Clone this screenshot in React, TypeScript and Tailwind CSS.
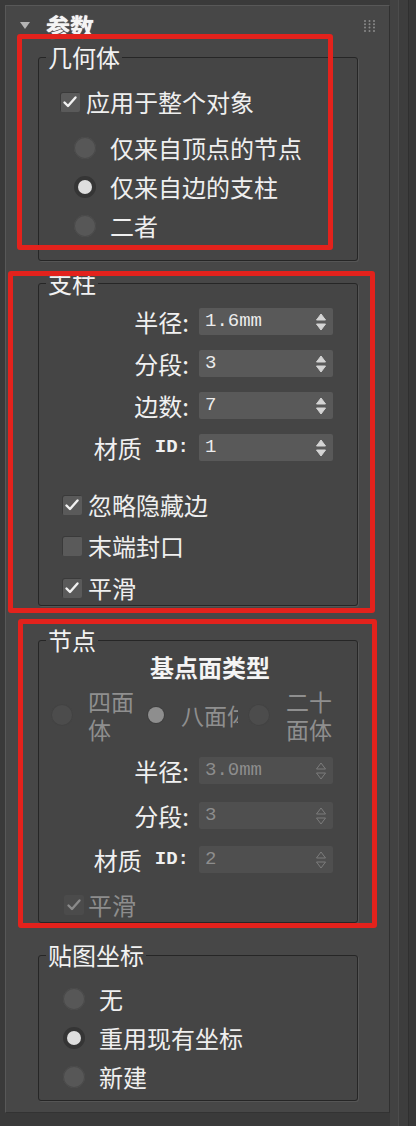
import React from "react";

const cjk = "font-['Noto_Sans_CJK_SC','Noto_Sans',sans-serif]";
const mono = "font-['Liberation_Mono','DejaVu_Sans_Mono',monospace]";

function Check({ checked, disabled }: { checked: boolean; disabled?: boolean }) {
  return (
    <div
      className={
        "w-[20px] h-[20px] rounded-[2px] flex items-center justify-center shrink-0 " +
        (disabled ? "bg-[#4b4b4b]" : "bg-[#5a5a5a] shadow-[inset_1px_1px_0_#3a3a3a]")
      }
    >
      {checked && (
        <svg width="16" height="16" viewBox="0 0 16 16">
          <path
            d="M2.5 8.5 L6 12 L13.5 3.5"
            fill="none"
            stroke={disabled ? "#8a8a8a" : "#f2f2f2"}
            strokeWidth="2.4"
            strokeLinecap="round"
            strokeLinejoin="round"
          />
        </svg>
      )}
    </div>
  );
}

function Radio({ checked, disabled }: { checked?: boolean; disabled?: boolean }) {
  if (disabled && checked) {
    return <div className="w-[16px] h-[16px] rounded-full bg-[#8e8e8e] shadow-[0_0_0_1px_#3e3e3e] shrink-0" />;
  }
  return (
    <div
      className={
        "w-[22px] h-[22px] rounded-full flex items-center justify-center shrink-0 " +
        (disabled
          ? "bg-[#4c4c4c] shadow-[inset_0_0_0_1px_#424242]"
          : checked
          ? "bg-[#353535]"
          : "bg-[#575757] shadow-[inset_0_0_0_1px_#4a4a4a]")
      }
    >
      {checked && <div className="w-[14px] h-[14px] rounded-full bg-[#dedede]" />}
    </div>
  );
}

function Arrows({ disabled }: { disabled?: boolean }) {
  const c = disabled ? "#7c7c7c" : "#d4d4d4";
  return (
    <svg width="12" height="20" viewBox="0 0 12 20" className="shrink-0">
      <path d="M6 2 L10.5 8 L1.5 8 Z" fill={disabled ? "none" : c} stroke={c} strokeWidth="1" />
      <path d="M6 18 L10.5 12 L1.5 12 Z" fill={disabled ? "none" : c} stroke={c} strokeWidth="1" />
    </svg>
  );
}

function Spinner({ label, id, value, disabled }: { label: string; id?: boolean; value: string; disabled?: boolean }) {
  return (
    <div className="flex items-center h-[27px]">
      <div className="w-[150px] flex justify-end items-center text-[#f0f0f0] text-[24px] leading-[27px]">
        <span className={cjk}>{label}</span>
        {id && <span className={mono + " font-bold text-[19px] ml-[13px]"}>ID</span>}
        <span className={id ? mono + " font-bold text-[19px]" : cjk}>:</span>
      </div>
      <div
        className={
          "ml-[10px] w-[134px] h-[27px] rounded-[2px] flex items-center justify-between pl-[6px] pr-[6px] " +
          (disabled ? "bg-[#4f4f4f]" : "bg-[#595959]")
        }
      >
        <span className={mono + " text-[19px] leading-none " + (disabled ? "text-[#8d8d8d]" : "text-[#ececec]")}>
          {value}
        </span>
        <Arrows disabled={disabled} />
      </div>
    </div>
  );
}

function Group({ title, children, className }: { title: string; children: React.ReactNode; className?: string }) {
  return (
    <fieldset
      className={
        "ml-[32px] w-[320px] border border-[#262626] rounded-[3px] bg-[#454545] shadow-[1px_1px_0_#555555] " +
        (className ?? "")
      }
    >
      <legend className={cjk + " ml-[7px] px-[2px] text-[24px] leading-[24px] text-[#f2f2f2]"}>{title}</legend>
      {children}
    </fieldset>
  );
}

function Grip() {
  const dots = [];
  for (let r = 0; r < 4; r++) for (let c = 0; c < 3; c++) dots.push(<circle key={r + "-" + c} cx={2 + c * 4.5} cy={2 + r * 3.3} r="1" fill="#8a8a8a" />);
  return (
    <svg width="14" height="13" viewBox="0 0 14 13">
      {dots}
    </svg>
  );
}

export default function App() {
  return (
    <div className={"relative w-[416px] h-[1126px] bg-[#3a3a3a] flex overflow-hidden " + cjk}>
      <div className="w-[5px] shrink-0" />
      <div className="mt-[5px] w-[385px] h-[1108px] bg-[#474747] border-t border-l border-[#585858] border-r border-r-[#303030] border-b border-b-[#333333] shrink-0">
        {/* rollout header */}
        <div className="h-[39px] flex items-center pl-[14px] pr-[12px]">
          <svg width="10" height="8" viewBox="0 0 10 8">
            <path d="M0 0 L10 0 L5 7 Z" fill="#b4b4b4" />
          </svg>
          <span className="ml-[16px] text-[24px] font-bold leading-none text-[#f4f4f4] [text-shadow:0_0_1px_#fff]">参数</span>
          <div className="ml-auto">
            <Grip />
          </div>
        </div>

        <Group title="几何体" className="pb-[20px]">
          <div className="mt-[19px] h-[28px] flex items-center pl-[21px]">
            <Check checked />
            <span className="ml-[6px] text-[24px] text-[#efefef]">应用于整个对象</span>
          </div>
          <div className="mt-[18px] h-[28px] flex items-center pl-[35px]">
            <Radio />
            <span className="ml-[14px] text-[24px] text-[#efefef]">仅来自顶点的节点</span>
          </div>
          <div className="mt-[11px] h-[28px] flex items-center pl-[35px]">
            <Radio checked />
            <span className="ml-[14px] text-[24px] text-[#efefef]">仅来自边的支柱</span>
          </div>
          <div className="mt-[11px] h-[28px] flex items-center pl-[35px]">
            <Radio />
            <span className="ml-[14px] text-[24px] text-[#efefef]">二者</span>
          </div>
        </Group>

        <Group title="支柱" className="mt-[10px] pb-[3px]">
          <div className="mt-[13px] flex flex-col gap-[15px]">
            <Spinner label="半径" value="1.6mm" />
            <Spinner label="分段" value="3" />
            <Spinner label="边数" value="7" />
            <Spinner label="材质" id value="1" />
          </div>
          <div className="mt-[30px] h-[28px] flex items-center pl-[23px]">
            <Check checked />
            <span className="ml-[6px] text-[24px] text-[#efefef]">忽略隐藏边</span>
          </div>
          <div className="mt-[13px] h-[28px] flex items-center pl-[23px]">
            <Check checked={false} />
            <span className="ml-[6px] text-[24px] text-[#efefef]">末端封口</span>
          </div>
          <div className="mt-[14px] h-[28px] flex items-center pl-[23px]">
            <Check checked />
            <span className="ml-[6px] text-[24px] text-[#efefef]">平滑</span>
          </div>
        </Group>

        <Group title="节点" className="mt-[22px] pb-[3px]">
          <div className="mt-[1px] h-[28px] pl-[111px] text-[24px] leading-[28px] font-bold text-[#f4f4f4]">基点面类型</div>
          <div className="mt-[5px] h-[57px] flex items-center pl-[12px] text-[23px] leading-[28px] text-[#8f8f8f]">
            <Radio disabled />
            <span className="ml-[15px] w-[47px]">四面体</span>
            <div className="ml-[13px]">
              <Radio disabled checked />
            </div>
            <span className="ml-[17px] w-[57px] overflow-hidden whitespace-nowrap">八面体</span>
            <div className="ml-[10px]">
              <Radio disabled />
            </div>
            <span className="ml-[16px] w-[47px]">二十面体</span>
          </div>
          <div className="mt-[14px]">
            <Spinner label="半径" value="3.0mm" disabled />
          </div>
          <div className="mt-[18px]">
            <Spinner label="分段" value="3" disabled />
          </div>
          <div className="mt-[17px]">
            <Spinner label="材质" id value="2" disabled />
          </div>
          <div className="mt-[18px] h-[28px] flex items-center pl-[25px]">
            <Check checked disabled />
            <span className="ml-[4px] text-[24px] text-[#8d8d8d]">平滑</span>
          </div>
        </Group>

        <Group title="贴图坐标" className="mt-[20px] pb-[9px]">
          <div className="mt-[18px] h-[28px] flex items-center pl-[24px]">
            <Radio />
            <span className="ml-[14px] text-[24px] text-[#efefef]">无</span>
          </div>
          <div className="mt-[11px] h-[28px] flex items-center pl-[24px]">
            <Radio checked />
            <span className="ml-[14px] text-[24px] text-[#efefef]">重用现有坐标</span>
          </div>
          <div className="mt-[11px] h-[28px] flex items-center pl-[24px]">
            <Radio />
            <span className="ml-[14px] text-[24px] text-[#efefef]">新建</span>
          </div>
        </Group>
      </div>

      {/* scroll strip on the right */}
      <div className="flex-1 flex">
        <div className="w-[9px] bg-[#424242] border-r border-[#4c4c4c]" />
        <div className="w-[10px] bg-[#3d3d3d] border-r border-[#2f2f2f]" />
        <div className="flex-1 bg-[#383838]" />
      </div>

      {/* red highlight frames */}
      <div className="absolute left-[17px] top-[34px] w-[316px] h-[216px] border-[5px] border-[#e3221c] rounded-[3px] pointer-events-none" />
      <div className="absolute left-[8px] top-[271px] w-[367px] h-[342px] border-[5px] border-[#e3221c] rounded-[3px] pointer-events-none" />
      <div className="absolute left-[18px] top-[619px] w-[359px] h-[309px] border-[5px] border-[#e3221c] rounded-[3px] pointer-events-none" />
    </div>
  );
}
